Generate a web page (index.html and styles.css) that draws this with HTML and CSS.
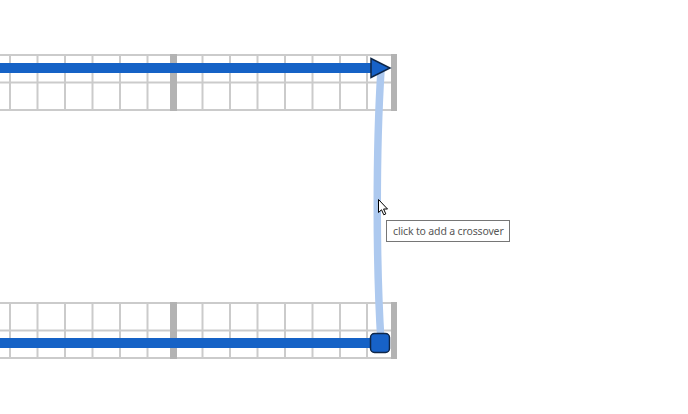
FILE: index.html
```html
<!DOCTYPE html>
<html>
<head>
<meta charset="utf-8">
<link rel="stylesheet" href="styles.css">
</head>
<body>
<div class="canvas">
  <svg class="diagram" width="688" height="414" viewBox="0 0 688 414">
    <defs>
      <g id="grid">
        <g class="gl">
          <line x1="0" y1="0" x2="394" y2="0"/>
          <line x1="0" y1="27.5" x2="394" y2="27.5"/>
          <line x1="0" y1="55" x2="394" y2="55"/>
          <line x1="10" y1="0" x2="10" y2="55"/>
          <line x1="37.5" y1="0" x2="37.5" y2="55"/>
          <line x1="65" y1="0" x2="65" y2="55"/>
          <line x1="92.5" y1="0" x2="92.5" y2="55"/>
          <line x1="120" y1="0" x2="120" y2="55"/>
          <line x1="147.5" y1="0" x2="147.5" y2="55"/>
          <line x1="202.5" y1="0" x2="202.5" y2="55"/>
          <line x1="230" y1="0" x2="230" y2="55"/>
          <line x1="257.5" y1="0" x2="257.5" y2="55"/>
          <line x1="285" y1="0" x2="285" y2="55"/>
          <line x1="312.5" y1="0" x2="312.5" y2="55"/>
          <line x1="340" y1="0" x2="340" y2="55"/>
          <line x1="367" y1="0" x2="367" y2="55"/>
        </g>
        <rect class="sep" x="170" y="-1" width="7" height="57"/>
        <rect class="sep" x="391" y="-1" width="6" height="57"/>
      </g>
    </defs>
    <use href="#grid" x="0" y="55"/>
    <use href="#grid" x="0" y="303"/>
    <rect class="track" x="0" y="63" width="372" height="10"/>
    <rect class="track" x="0" y="338" width="372" height="10"/>
    <path class="link" d="M381 70 C 376 150, 376 262, 381 342"/>
    <path class="arrow" d="M371 58.5 L390 68 L371 77.5 Z"/>
    <rect class="node" x="370.5" y="333.5" width="19" height="19" rx="4" ry="4"/>
  </svg>
  <svg class="cursor" width="12" height="18" viewBox="0 0 12 18">
    <path d="M0.5 0.5 L0.5 13.5 L3.5 10.8 L5.8 15.8 L7.8 14.9 L5.6 10 L9.5 10 Z" fill="#fff" stroke="#000" stroke-width="1" stroke-linejoin="miter"/>
  </svg>
  <div class="tooltip">click to add a crossover</div>
</div>
</body>
</html>
```
FILE: styles.css
```css
html, body {
  margin: 0;
  padding: 0;
  background: #ffffff;
}

.canvas {
  position: relative;
  width: 688px;
  height: 414px;
  overflow: hidden;
}

.diagram {
  display: block;
}

.gl line {
  stroke: #cbcbcb;
  stroke-width: 2;
}

.sep {
  fill: #b3b3b3;
}

.track {
  fill: #1562c6;
}

.link {
  fill: none;
  stroke: #adc9ef;
  stroke-width: 7.5;
}

.arrow {
  fill: #1762c8;
  stroke: #0f2748;
  stroke-width: 1.5;
  stroke-linejoin: miter;
}

.node {
  fill: #1762c8;
  stroke: #0f2748;
  stroke-width: 1.5;
}

.cursor {
  position: absolute;
  left: 378px;
  top: 199px;
}

.tooltip {
  position: absolute;
  left: 386px;
  top: 220px;
  box-sizing: border-box;
  height: 22px;
  padding: 0 5px 0 6px;
  border: 1px solid #767676;
  background: #ffffff;
  color: #575757;
  font-family: "Noto Sans", "Open Sans", sans-serif;
  font-size: 10.5px;
  letter-spacing: -0.15px;
  line-height: 20px;
  white-space: nowrap;
}
```
